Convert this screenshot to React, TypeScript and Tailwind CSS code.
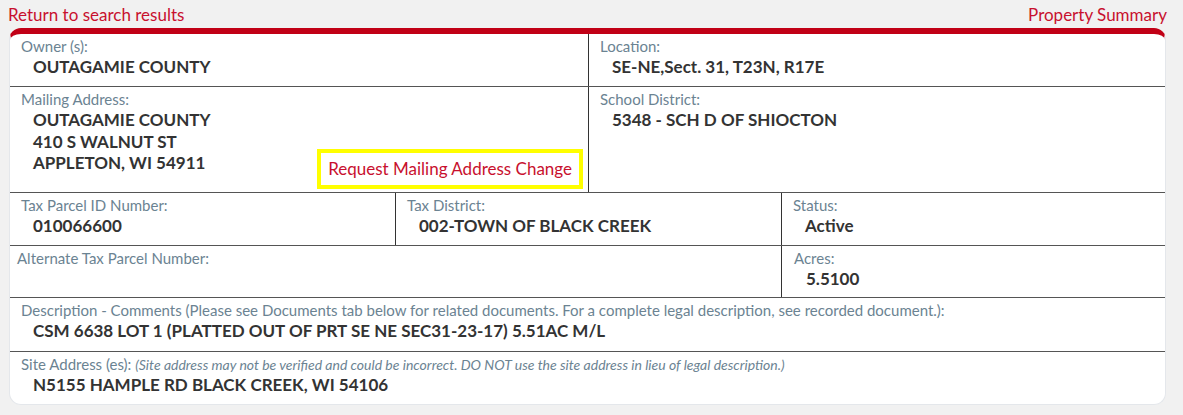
export default function App() {
  return (
    <div className="min-h-[415px] bg-[#f1f1f1] font-['Lato','Liberation_Sans',sans-serif] text-[#333]">
      <div className="flex h-[28px] items-end justify-between pl-[8px] pr-[16px] pb-[3px] text-[17px] leading-[20px] text-[#c8102e]">
        <a href="#">Return to search results</a>
        <a href="#">Property Summary</a>
      </div>

      <div className="ml-[9px] w-[1157px] overflow-hidden rounded-xl border border-t-[6px] border-[#e4e7eb] border-t-[#c10016] bg-white">
        <div className="flex h-[53px] border-b border-[#555]">
          <Cell className="w-[579px] border-r border-[#333]" label="Owner (s):" value="OUTAGAMIE COUNTY" />
          <Cell className="flex-1" label="Location:" value="SE-NE,Sect. 31, T23N, R17E" />
        </div>

        <div className="flex h-[106px] border-b border-[#555]">
          <div className="flex w-[579px] justify-between border-r border-[#333] pl-[11px] pr-[5px] pt-[3px] pb-[3px]">
            <div>
              <Label>Mailing Address:</Label>
              <div className="pl-[12px] text-[17px] leading-[21.5px] font-bold">
                <div>OUTAGAMIE COUNTY</div>
                <div>410 S WALNUT ST</div>
                <div>APPLETON, WI 54911</div>
              </div>
            </div>
            <div className="self-end">
              <a
                href="#"
                className="block border-[4px] border-[#ffff00] px-[7px] pt-[6px] pb-[6px] text-[17px] leading-[20px] text-[#c8102e]"
              >
                Request Mailing Address Change
              </a>
            </div>
          </div>
          <Cell className="flex-1" label="School District:" value="5348 - SCH D OF SHIOCTON" />
        </div>

        <div className="flex h-[53px] border-b border-[#555]">
          <Cell className="w-[386px] border-r border-[#333]" label="Tax Parcel ID Number:" value="010066600" />
          <Cell className="w-[386px] border-r border-[#333]" label="Tax District:" value="002-TOWN OF BLACK CREEK" />
          <Cell className="flex-1" label="Status:" value="Active" />
        </div>

        <div className="flex h-[52px] border-b border-[#555]">
          <div className="w-[772px] border-r border-[#333] pl-[7px] pt-[3px]">
            <Label>Alternate Tax Parcel Number:</Label>
          </div>
          <div className="flex-1 pl-[12px] pt-[3px]">
            <Label>Acres:</Label>
            <div className="pl-[12px] text-[17px] leading-[22px] font-bold">5.5100</div>
          </div>
        </div>

        <div className="flex h-[54px] border-b border-[#555]">
          <Cell
            className="flex-1"
            label="Description - Comments (Please see Documents tab below for related documents. For a complete legal description, see recorded document.):"
            value="CSM 6638 LOT 1 (PLATTED OUT OF PRT SE NE SEC31-23-17) 5.51AC M/L"
          />
        </div>

        <div className="h-[52px] pl-[11px] pt-[3px]">
          <div className="text-[15px] leading-[19px] text-[#6b8392]">
            Site Address (es):{' '}
            <span className="text-[14px] italic">
              (Site address may not be verified and could be incorrect. DO NOT use the site address in lieu of legal description.)
            </span>
          </div>
          <div className="pl-[12px] text-[17px] leading-[22px] font-bold">N5155 HAMPLE RD BLACK CREEK, WI 54106</div>
        </div>
      </div>
    </div>
  );
}

function Label({ children }: { children: React.ReactNode }) {
  return <div className="text-[15px] leading-[19px] text-[#6b8392]">{children}</div>;
}

function Cell({ label, value, className = '' }: { label: string; value: string; className?: string }) {
  return (
    <div className={`pl-[11px] pt-[3px] ${className}`}>
      <Label>{label}</Label>
      <div className="pl-[12px] text-[17px] leading-[22px] font-bold">{value}</div>
    </div>
  );
}
